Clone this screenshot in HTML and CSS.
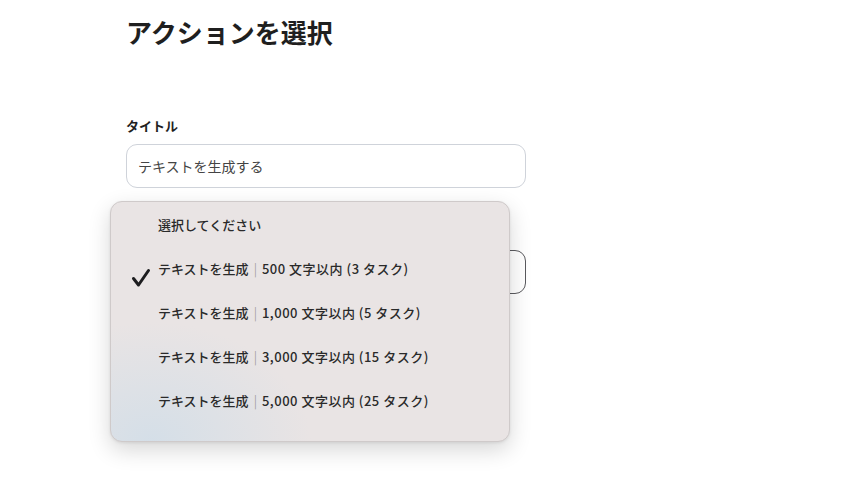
FILE: index.html
```html
<!DOCTYPE html>
<html lang="ja">
<head>
<meta charset="utf-8">
<link rel="stylesheet" href="styles.css">
</head>
<body>
<main class="page">
  <h1 class="title">アクションを選択</h1>
  <div class="field">
    <div class="label">タイトル</div>
    <div class="input">テキストを生成する</div>
  </div>
  <div class="field field-second">
    <div class="select"></div>
  </div>
</main>
<div class="menu">
  <div class="item"><span class="check"></span><span class="text">選択してください</span></div>
  <div class="item selected"><span class="check"><svg width="20" height="20" viewBox="0 0 20 20"><path d="M2.5 10.5 L7.5 17 L17.5 2.5" fill="none" stroke="#1d1d1f" stroke-width="3" stroke-linecap="round" stroke-linejoin="round"/></svg></span><span class="text">テキストを生成<span class="sep">|</span><span class="detail">500 文字以内 (3 タスク)</span></span></div>
  <div class="item"><span class="check"></span><span class="text">テキストを生成<span class="sep">|</span><span class="detail">1,000 文字以内 (5 タスク)</span></span></div>
  <div class="item"><span class="check"></span><span class="text">テキストを生成<span class="sep">|</span><span class="detail">3,000 文字以内 (15 タスク)</span></span></div>
  <div class="item"><span class="check"></span><span class="text">テキストを生成<span class="sep">|</span><span class="detail">5,000 文字以内 (25 タスク)</span></span></div>
</div>
</body>
</html>
```

FILE: styles.css
```css
html, body {
  margin: 0;
  padding: 0;
  background: #ffffff;
  font-family: "Noto Sans CJK JP", "Noto Sans", sans-serif;
  color: #222;
}
.page {
  width: 400px;
  padding: 12px 0 0 126px;
}
.title {
  margin: 0;
  font-size: 26px;
  line-height: 40px;
  font-weight: 700;
  color: #1f1f1f;
}
.field {
  display: flex;
  flex-direction: column;
  gap: 10px;
}
.field:first-of-type {
  margin-top: 66px;
}
.label {
  font-size: 13px;
  line-height: 16px;
  font-weight: 700;
  color: #1f1f1f;
}
.input {
  box-sizing: border-box;
  height: 44px;
  border: 1px solid #cfd3da;
  border-radius: 11px;
  padding: 0 11px;
  display: flex;
  align-items: center;
  font-size: 14px;
  color: #444;
}
.field-second {
  margin-top: 62px;
}
.select {
  box-sizing: border-box;
  height: 44px;
  border: 1px solid #5a5a5e;
  border-radius: 11px;
}
.menu {
  position: absolute;
  left: 110px;
  top: 201px;
  width: 400px;
  height: 241px;
  box-sizing: border-box;
  border-radius: 12px;
  border: 1px solid #cfcaca;
  background:
    radial-gradient(ellipse 160px 120px at 40px 240px, rgba(210,222,232,0.9), rgba(210,222,232,0) 100%),
    #e9e4e4;
  box-shadow: 0 8px 22px rgba(0,0,0,0.16), 0 1px 3px rgba(0,0,0,0.08);
}
.item {
  height: 44px;
  display: flex;
  align-items: center;
  font-size: 13px;
  font-weight: 500;
  color: #2a2a2a;
}
.check {
  width: 47px;
  display: flex;
  justify-content: flex-end;
}
.check svg {
  margin: 20px 7px 0 0;
}
.item .text {
  white-space: pre;
}
.sep {
  color: #8a8a8a;
  font-weight: 300;
  margin: 0 5px 0 5px;
}
.detail {
  letter-spacing: 0.5px;
}
```
